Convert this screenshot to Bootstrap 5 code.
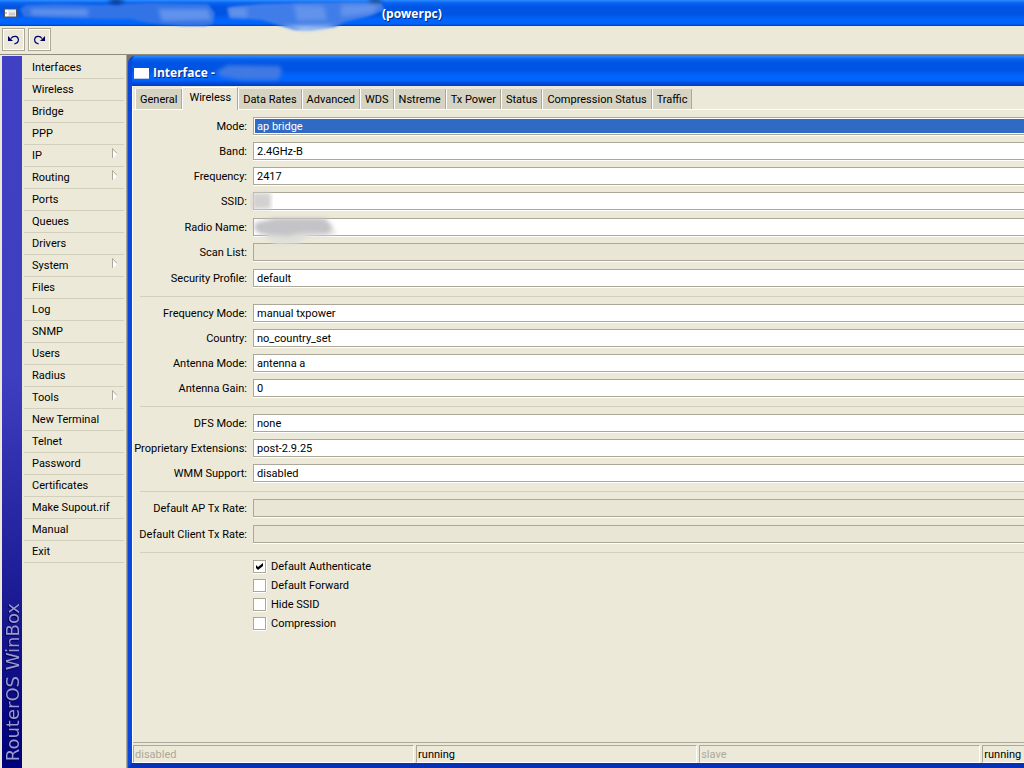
<!DOCTYPE html>
<html lang="en">
<head>
<meta charset="utf-8">
<meta name="viewport" content="width=device-width, initial-scale=1">
<title>RouterOS WinBox</title>
<link href="https://cdn.jsdelivr.net/npm/bootstrap@5.3.0/dist/css/bootstrap.min.css" rel="stylesheet">
<style>
  :root { --face: #ece9d8; --edge: #aca899; --rule: #d2cfbd; }
  body { background: var(--face); color: #000; font: 11px/16px Roboto, "Liberation Sans", sans-serif; overflow: hidden; }
  .caption { color: #fff; font: bold 12px/16px "Open Sans", "Noto Sans", sans-serif; text-shadow: 1px 1px 0 #0a2a80;
    background: linear-gradient(#2a8cff 0, #0a63f0 3px, #0054e3 7px, #0054e3 14px, #0066ff 20px, #0064fa 24px, #0038c0 100%); }
  .caption svg { flex: none; }
  .smudge { top: 0; left: 0; overflow: visible; pointer-events: none; }
  .app-caption { height: 26px; padding-top: 2px; }
  .app-name { margin-left: 382px; position: relative; z-index: 1; }
  .toolbar { height: 29px; padding: 2px; gap: 3px; border-bottom: 1px solid #8f8c7e; }
  .tool { width: 23px; height: 23px; padding: 0; border: 1px solid var(--edge); outline: 1px solid #fff; outline-offset: -2px; background: var(--face); }
  .brand { width: 20px; margin: 1px 2px 0; padding: 0 0 7px 1px; background: linear-gradient(#4040c4 0, #3e3ec0 45%, #16168e 80%, #00007c 100%); }
  .brand span { writing-mode: vertical-rl; transform: rotate(180deg); font: 18px/20px "DejaVu Sans", sans-serif; color: #9a9ad2; text-shadow: -1px -1px 1px #000048; white-space: nowrap; }
  .menu { width: 102px; padding-top: 2px; }
  .menu a { height: 22px; padding: 3px 6px 2px 8px; margin-right: 2px; color: #000; text-decoration: none; border-bottom: 1px solid var(--rule); }
  .mdi { background: #77756a; padding: 1px 0 0 1px; border-left: 1px solid #aca899; min-width: 0; }
  .child { border-left: 4px solid #0a48dc; border-bottom: 5px solid #0831b5; border-radius: 7px 0 0 0; background: #0054e3; overflow: hidden; }
  .child-caption { height: 30px; padding: 4px 0 0 2px; }
  .pane { background: var(--face); border-left: 1px solid #fff; }
  .tabs { padding: 2px 0 0 2px; border-bottom: 1px solid #fff; }
  .tab-key { height: 20px; padding: 3px 4px 1px; border: 0; border-left: 1px solid #fff; border-right: 1px solid var(--edge); background: #d6d3c2; white-space: nowrap; }
  .tab-key.active { height: 23px; margin: -1px 0 -1px; padding: 2px 6px 4px; background: var(--face); border-top: 1px solid #fff; z-index: 1; }
  .settings { padding: 7px 0 0 7px; }
  .entry { height: 18px; margin-bottom: 7px; }
  .entry.optional { margin-bottom: 8px; }
  .entry label { width: 107px; margin-right: 6px; padding-top: 1px; white-space: nowrap; display: flex; justify-content: flex-end; }
  .entry input { height: 18px; padding: 1px 3px 0; border: 1px solid var(--edge); border-right: 0; border-radius: 0; box-shadow: 0 1px #fff; background: #fff; color: #000; font: inherit; min-width: 0; outline: 0; }
  .entry input:disabled { background: #e9e6d5; }
  .entry input.picked { background: #316ac5; color: #fff; box-shadow: inset 1px 1px #fff, inset 0 -1px #fff, 0 1px #fff; }
  .split { height: 1px; background: var(--rule); margin: 9px 0 7px; }
  .ticks { margin: -3px 0 0 113px; }
  .ticks label { height: 19px; }
  .ticks input { appearance: none; width: 13px; height: 13px; margin: 0 5px 0 0; border: 1px solid var(--edge); background: #fff; box-shadow: 0 1px #fff, 1px 0 #fff; }
  .ticks input:checked { background: #fff url("data:image/svg+xml,%3Csvg xmlns='http://www.w3.org/2000/svg' viewBox='0 0 11 11'%3E%3Cpath d='M2 4l2 2 5-4v3L4 9 2 7z'/%3E%3C/svg%3E"); }
  .states { border-top: 1px solid var(--edge); padding-top: 2px; }
  .state { flex: 7 1 0; min-width: 0; height: 18px; margin-right: 2px; padding: 1px 0 0 1px; border: 1px solid var(--edge); border-right-color: #fff; border-bottom-color: #fff; white-space: nowrap; }
  .state.last { flex-grow: 1; margin-right: 0; border-right: 0; }
  .off { color: #aca899; }
</style>
</head>
<body class="d-flex flex-column vh-100">
  <header class="caption app-caption position-relative d-flex align-items-center flex-shrink-0">
    <svg class="smudge position-absolute" width="460" height="34" viewBox="0 0 460 34" aria-hidden="true">
      <defs><filter id="soft" x="-10%" y="-40%" width="120%" height="180%"><feGaussianBlur stdDeviation="2"/></filter>
      <filter id="faint" x="-10%" y="-40%" width="120%" height="180%"><feGaussianBlur stdDeviation="1"/></filter></defs>
      <g filter="url(#faint)">
        <path d="M20 9L26 5 55 4 100 5 150 3 208 4 215 13 213 24 205 26 185 26 150 23 130 19 100 19 60 18 24 17z" fill="#3373e6"/>
        <path d="M227 8L240 6 260 4 300 3 345 2 381 3 385 10 366 17 345 22 335 27 310 30 295 30 281 26 262 20 230 18z" fill="#3f7de8"/>
      </g>
      <g filter="url(#soft)">
        <path d="M229 8h18v9h-17zM294 5l30 1 3 14-30 1zM341 5l38-1-6 9-32 4zM158 9l50 0 4 11-50 1zM30 9l58 0 0 7-56-1z" fill="#6293ec"/>
        <path d="M282 26l22 5 20-2 12-4-15 1z" fill="#b4cdf3"/>
        <path d="M108 0h17l-5 3h-8zM368 0h15l-5 3h-7z" fill="#02194e"/>
      </g>
    </svg>
    <svg class="position-absolute top-50 translate-middle-y ms-1" width="13" height="9" viewBox="0 0 13 9" aria-hidden="true"><path fill="#555" d="M0 0h13v9H0z"/><path fill="#fff" d="M1 1h3v7H1z"/><path fill="#ececec" d="M4 1h8v7H4z"/><path fill="#ccc" d="M5 4h6v3H5z"/><path fill="#888" d="M1 4h2v1H1z"/></svg>
    <span class="app-name">(powerpc)</span>
  </header>

  <div class="toolbar d-flex flex-shrink-0" role="toolbar">
    <button class="tool d-flex align-items-center justify-content-center" type="button" aria-label="Undo">
      <svg width="13" height="10" viewBox="0 0 13 10"><path fill="#00006a" d="M1 1v5h5z"/><path fill="none" stroke="#00006a" stroke-width="1.2" d="M4 3.500C6 .5 11 .7 11.400 4.500c0 2.500-1.700 4-4 4.300"/></svg>
    </button>
    <button class="tool d-flex align-items-center justify-content-center" type="button" aria-label="Redo">
      <svg width="13" height="10" viewBox="0 0 13 10"><path fill="#00006a" d="M12 1v5H7z"/><path fill="none" stroke="#00006a" stroke-width="1.2" d="M9 3.500C7 .5 2 .7 1.600 4.500c0 2.500 1.700 4 4 4.300"/></svg>
    </button>
  </div>

  <div class="d-flex flex-grow-1">
    <div class="brand d-flex flex-column justify-content-end flex-shrink-0"><span>RouterOS WinBox</span></div>
    <nav class="menu d-flex flex-column flex-shrink-0">
      <a href="#">Interfaces</a>
      <a href="#">Wireless</a>
      <a href="#">Bridge</a>
      <a href="#">PPP</a>
      <a href="#" class="d-flex justify-content-between">IP <svg width="6" height="11" viewBox="0 0 6 11"><path d="M.5 10V.5L5 5.500" fill="#fff" stroke="#aca899"/><path d="M5 5.500L1 10" stroke="#fff"/></svg></a>
      <a href="#" class="d-flex justify-content-between">Routing <svg width="6" height="11" viewBox="0 0 6 11"><path d="M.5 10V.5L5 5.500" fill="#fff" stroke="#aca899"/><path d="M5 5.500L1 10" stroke="#fff"/></svg></a>
      <a href="#">Ports</a>
      <a href="#">Queues</a>
      <a href="#">Drivers</a>
      <a href="#" class="d-flex justify-content-between">System <svg width="6" height="11" viewBox="0 0 6 11"><path d="M.5 10V.5L5 5.500" fill="#fff" stroke="#aca899"/><path d="M5 5.500L1 10" stroke="#fff"/></svg></a>
      <a href="#">Files</a>
      <a href="#">Log</a>
      <a href="#">SNMP</a>
      <a href="#">Users</a>
      <a href="#">Radius</a>
      <a href="#" class="d-flex justify-content-between">Tools <svg width="6" height="11" viewBox="0 0 6 11"><path d="M.5 10V.5L5 5.500" fill="#fff" stroke="#aca899"/><path d="M5 5.500L1 10" stroke="#fff"/></svg></a>
      <a href="#">New Terminal</a>
      <a href="#">Telnet</a>
      <a href="#">Password</a>
      <a href="#">Certificates</a>
      <a href="#">Make Supout.rif</a>
      <a href="#">Manual</a>
      <a href="#">Exit</a>
    </nav>

    <main class="mdi d-flex flex-grow-1">
      <section class="child d-flex flex-column flex-grow-1">
        <div class="caption child-caption position-relative d-flex align-items-center flex-shrink-0">
          <svg width="15" height="11" viewBox="0 0 15 11" class="me-1" aria-hidden="true"><path fill="#fff" d="M0 0h15v11H0z"/><path fill="#b9cdf0" d="M0 10h15v1H0z"/></svg>
          <span>Interface -</span>
          <svg class="smudge position-absolute" width="160" height="30" viewBox="0 0 160 30" aria-hidden="true">
            <path d="M84 16L96 9 148 10 150 17 146 24 110 24 90 21z" fill="#4179e4" filter="url(#soft)"/>
          </svg>
        </div>

        <div class="pane d-flex flex-column flex-grow-1">
          <div class="tabs d-flex align-items-end" role="tablist">
            <button type="button" class="tab-key" role="tab">General</button>
            <button type="button" class="tab-key active" role="tab" aria-selected="true">Wireless</button>
            <button type="button" class="tab-key" role="tab">Data Rates</button>
            <button type="button" class="tab-key" role="tab">Advanced</button>
            <button type="button" class="tab-key" role="tab">WDS</button>
            <button type="button" class="tab-key" role="tab">Nstreme</button>
            <button type="button" class="tab-key" role="tab">Tx Power</button>
            <button type="button" class="tab-key" role="tab">Status</button>
            <button type="button" class="tab-key" role="tab">Compression Status</button>
            <button type="button" class="tab-key" role="tab">Traffic</button>
          </div>

          <form class="settings flex-grow-1">
            <div class="entry d-flex align-items-center"><label for="mode">Mode:</label><input class="flex-grow-1 picked" id="mode" type="text" value="ap bridge"></div>
            <div class="entry d-flex align-items-center"><label for="band">Band:</label><input class="flex-grow-1" id="band" type="text" value="2.4GHz-B"></div>
            <div class="entry d-flex align-items-center"><label for="freq">Frequency:</label><input class="flex-grow-1" id="freq" type="text" value="2417"></div>
            <div class="entry optional position-relative d-flex align-items-center"><label for="ssid">SSID:</label><input class="flex-grow-1" id="ssid" type="text">
              <svg class="smudge position-absolute" width="200" height="24" viewBox="0 0 200 24" aria-hidden="true"><path d="M112 1h19v16h-19z" fill="#d3d2d0" filter="url(#soft)"/></svg></div>
            <div class="entry position-relative d-flex align-items-center"><label for="radio">Radio Name:</label><input class="flex-grow-1" id="radio" type="text">
              <svg class="smudge position-absolute" width="200" height="26" viewBox="0 0 200 26" aria-hidden="true"><g filter="url(#soft)"><path d="M127 10l30 2 35-5 4 9-28 3-10 6-20 2-12-7z" fill="#e0dfda"/><path d="M115 5l20-5 50 0 7 8-4 8-26-1-15 3-27-2-6-5z" fill="#c4c4c8"/></g></svg></div>
            <div class="entry optional d-flex align-items-center"><label for="scan">Scan List:</label><input class="flex-grow-1" id="scan" type="text" disabled></div>
            <div class="entry d-flex align-items-center"><label for="profile">Security Profile:</label><input class="flex-grow-1" id="profile" type="text" value="default"></div>
            <div class="split"></div>
            <div class="entry d-flex align-items-center"><label for="fmode">Frequency Mode:</label><input class="flex-grow-1" id="fmode" type="text" value="manual txpower"></div>
            <div class="entry d-flex align-items-center"><label for="country">Country:</label><input class="flex-grow-1" id="country" type="text" value="no_country_set"></div>
            <div class="entry d-flex align-items-center"><label for="amode">Antenna Mode:</label><input class="flex-grow-1" id="amode" type="text" value="antenna a"></div>
            <div class="entry d-flex align-items-center"><label for="gain">Antenna Gain:</label><input class="flex-grow-1" id="gain" type="text" value="0"></div>
            <div class="split"></div>
            <div class="entry d-flex align-items-center"><label for="dfs">DFS Mode:</label><input class="flex-grow-1" id="dfs" type="text" value="none"></div>
            <div class="entry d-flex align-items-center"><label for="ext">Proprietary Extensions:</label><input class="flex-grow-1" id="ext" type="text" value="post-2.9.25"></div>
            <div class="entry d-flex align-items-center"><label for="wmm">WMM Support:</label><input class="flex-grow-1" id="wmm" type="text" value="disabled"></div>
            <div class="split"></div>
            <div class="entry optional d-flex align-items-center"><label for="aprate">Default AP Tx Rate:</label><input class="flex-grow-1" id="aprate" type="text" disabled></div>
            <div class="entry optional d-flex align-items-center"><label for="clrate">Default Client Tx Rate:</label><input class="flex-grow-1" id="clrate" type="text" disabled></div>
            <div class="split"></div>
            <div class="ticks d-flex flex-column align-items-start">
              <label class="d-flex align-items-center"><input type="checkbox" checked>Default Authenticate</label>
              <label class="d-flex align-items-center"><input type="checkbox">Default Forward</label>
              <label class="d-flex align-items-center"><input type="checkbox">Hide SSID</label>
              <label class="d-flex align-items-center"><input type="checkbox">Compression</label>
            </div>
          </form>

          <footer class="states d-flex">
            <div class="state off">disabled</div>
            <div class="state">running</div>
            <div class="state off">slave</div>
            <div class="state last">running</div>
          </footer>
        </div>
      </section>
    </main>
  </div>
<script src="https://cdn.jsdelivr.net/npm/bootstrap@5.3.0/dist/js/bootstrap.bundle.min.js"></script>
</body>
</html>
